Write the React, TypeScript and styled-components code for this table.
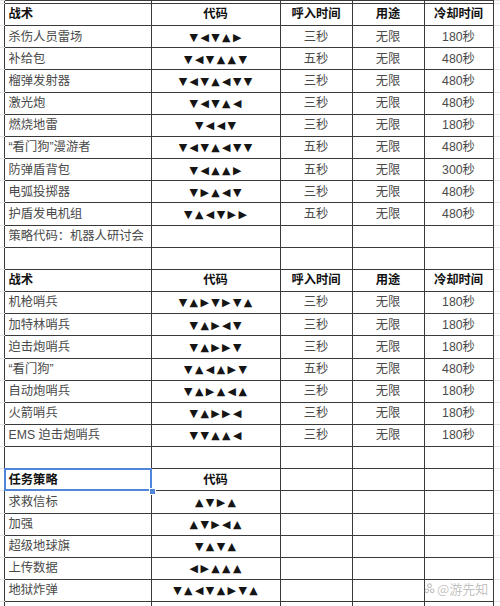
import styled, { createGlobalStyle } from 'styled-components'

const GlobalStyle = createGlobalStyle`
  html, body {
    margin: 0;
    padding: 0;
    background: #fff;
  }
  body {
    width: 500px;
    height: 606px;
    overflow: hidden;
    font-family: 'Liberation Sans', 'Noto Sans CJK SC', sans-serif;
  }
`

const Page = styled.div`
  position: relative;
  width: 500px;
  height: 606px;
  overflow: hidden;
`

const Sheet = styled.table`
  width: 500px;
  border-collapse: collapse;
  table-layout: fixed;
`

const Row = styled.tr<{ $h?: number }>`
  height: ${(p) => p.$h ?? 22.17}px;
`

const Cell = styled.td<{ $center?: boolean; $bold?: boolean; $selected?: boolean }>`
  position: ${(p) => (p.$selected ? 'relative' : 'static')};
  border: 1px solid #3a3a3a;
  padding: 0 4px;
  font-size: 12.3px;
  line-height: 1;
  color: ${(p) => (p.$bold ? '#111' : '#4a4a4a')};
  font-weight: ${(p) => (p.$bold ? 700 : 400)};
  text-align: ${(p) => (p.$center ? 'center' : 'left')};
  white-space: nowrap;
  overflow: visible;
`

const Gutter = styled.td`
  border-top: 1px solid #e2e2e2;
  border-bottom: 1px solid #e2e2e2;
  padding: 0;
`

const Code = styled.span`
  font-family: 'DejaVu Sans', sans-serif;
  font-size: 11px;
  letter-spacing: 2.4px;
  color: #151515;
  margin-right: -2.4px;
`

const Selection = styled.span`
  position: absolute;
  inset: -1px;
  border: 2px solid #4f86d9;
  pointer-events: none;
`

const Handle = styled.span`
  position: absolute;
  right: -5px;
  bottom: -5px;
  width: 5px;
  height: 5px;
  background: #4f86d9;
  border: 1px solid #fff;
`

const Watermark = styled.div`
  position: absolute;
  left: 424px;
  top: 579px;
  display: flex;
  align-items: center;
  gap: 2px;
  font-family: 'Noto Sans CJK SC', sans-serif;
  font-size: 13px;
  white-space: nowrap;
  color: rgba(140, 140, 140, 0.55);
`

type Item = {
  name: string
  code?: string
  call?: string
  use?: string
  cool?: string
}

const D = '▼'
const L = '◀'
const U = '▲'
const R = '▶'

const section1: Item[] = [
  { name: '杀伤人员雷场', code: D + L + D + U + R, call: '三秒', use: '无限', cool: '180秒' },
  { name: '补给包', code: D + L + D + U + U + D, call: '五秒', use: '无限', cool: '480秒' },
  { name: '榴弹发射器', code: D + L + D + U + L + D + D, call: '三秒', use: '无限', cool: '480秒' },
  { name: '激光炮', code: D + L + D + U + L, call: '三秒', use: '无限', cool: '480秒' },
  { name: '燃烧地雷', code: D + L + L + D, call: '三秒', use: '无限', cool: '180秒' },
  { name: '“看门狗”漫游者', code: D + L + D + U + L + D + D, call: '五秒', use: '无限', cool: '480秒' },
  { name: '防弹盾背包', code: D + L + U + U + R, call: '五秒', use: '无限', cool: '300秒' },
  { name: '电弧投掷器', code: D + R + U + L + D, call: '三秒', use: '无限', cool: '480秒' },
  { name: '护盾发电机组', code: D + U + L + D + R + R, call: '五秒', use: '无限', cool: '480秒' },
  { name: '策略代码：机器人研讨会' },
  { name: '' },
]

const section2: Item[] = [
  { name: '机枪哨兵', code: D + U + R + D + R + D + U, call: '三秒', use: '无限', cool: '180秒' },
  { name: '加特林哨兵', code: D + U + R + L + D, call: '三秒', use: '无限', cool: '180秒' },
  { name: '迫击炮哨兵', code: D + U + R + R + D, call: '三秒', use: '无限', cool: '180秒' },
  { name: '“看门狗”', code: D + U + L + U + R + D, call: '五秒', use: '无限', cool: '480秒' },
  { name: '自动炮哨兵', code: D + U + R + U + L + U, call: '三秒', use: '无限', cool: '180秒' },
  { name: '火箭哨兵', code: D + U + R + R + L, call: '三秒', use: '无限', cool: '180秒' },
  { name: 'EMS 迫击炮哨兵', code: D + D + U + U + L, call: '三秒', use: '无限', cool: '180秒' },
  { name: '' },
]

const section3: Item[] = [
  { name: '求救信标', code: U + D + R + U },
  { name: '加强', code: U + D + R + L + U },
  { name: '超级地球旗', code: D + U + D + U },
  { name: '上传数据', code: L + R + U + U + U },
  { name: '地狱炸弹', code: D + U + L + D + U + R + D + U },
]

function ItemRow({ item }: { item: Item }) {
  return (
    <Row>
      <Gutter />
      <Cell>{item.name}</Cell>
      <Cell $center>{item.code && <Code>{item.code}</Code>}</Cell>
      <Cell $center>{item.call}</Cell>
      <Cell $center>{item.use}</Cell>
      <Cell $center>{item.cool}</Cell>
      <Gutter />
    </Row>
  )
}

function HeaderRow({ title, full, selected }: { title: string; full?: boolean; selected?: boolean }) {
  return (
    <Row>
      <Gutter />
      <Cell $bold $selected={selected}>
        {title}
        {selected && (
          <>
            <Selection />
            <Handle />
          </>
        )}
      </Cell>
      <Cell $bold $center>代码</Cell>
      <Cell $bold $center>{full && '呼入时间'}</Cell>
      <Cell $bold $center>{full && '用途'}</Cell>
      <Cell $bold $center>{full && '冷却时间'}</Cell>
      <Gutter />
    </Row>
  )
}

function EdgeRow({ h }: { h: number }) {
  return (
    <Row $h={h}>
      <Gutter />
      <Cell />
      <Cell />
      <Cell />
      <Cell />
      <Cell />
      <Gutter />
    </Row>
  )
}

export default function App() {
  return (
    <Page>
      <GlobalStyle />
      <Sheet>
        <colgroup>
          <col style={{ width: 4 }} />
          <col style={{ width: 147 }} />
          <col style={{ width: 129 }} />
          <col style={{ width: 72 }} />
          <col style={{ width: 72 }} />
          <col style={{ width: 69 }} />
          <col style={{ width: 7 }} />
        </colgroup>
        <tbody>
          <EdgeRow h={3} />
          <HeaderRow title="战术" full />
          {section1.map((item, i) => (
            <ItemRow key={'a' + i} item={item} />
          ))}
          <HeaderRow title="战术" full />
          {section2.map((item, i) => (
            <ItemRow key={'b' + i} item={item} />
          ))}
          <HeaderRow title="任务策略" selected />
          {section3.map((item, i) => (
            <ItemRow key={'c' + i} item={item} />
          ))}
          <EdgeRow h={12} />
        </tbody>
      </Sheet>
      <Watermark>
        <svg width="11" height="11" viewBox="0 0 12 12" fill="none" stroke="currentColor" strokeWidth="1.2">
          <circle cx="6" cy="3" r="2" />
          <circle cx="3" cy="8.5" r="2" />
          <circle cx="9" cy="8.5" r="2" />
        </svg>
        <span>@游先知</span>
      </Watermark>
    </Page>
  )
}
